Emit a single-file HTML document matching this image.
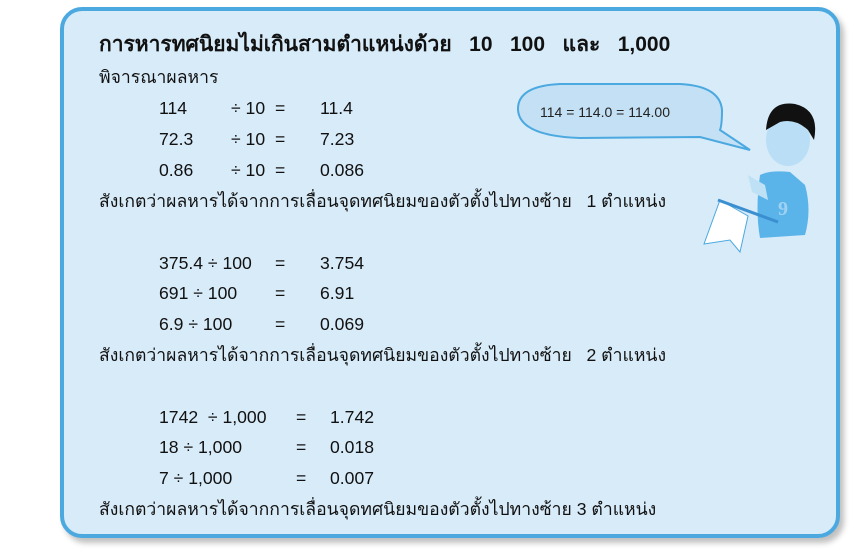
<!DOCTYPE html><html><head><meta charset="utf-8"><style>
body{margin:0;width:864px;height:557px;background:#fff;position:relative;font-family:"Liberation Sans","Noto Sans CJK SC",sans-serif;color:#111;overflow:hidden}
.box{position:absolute;left:60px;top:7px;width:772px;height:523px;border:4px solid #4ba9e0;border-radius:22px;background:#d8ebf9;box-shadow:4px 5px 6px rgba(0,0,0,.25)}
.t{position:absolute;font-size:17.6px;white-space:nowrap;line-height:20px}
.h{font-weight:bold;font-size:21px}
</style></head><body>
<div class="box"></div>
<div class="t h" style="left:99px;top:35px">การหารทศนิยมไม่เกินสามตำแหน่งด้วย&nbsp;&nbsp; 10&nbsp;&nbsp; 100&nbsp;&nbsp; และ&nbsp;&nbsp; 1,000</div>
<div class="t" style="left:99px;top:67px">พิจารณาผลหาร</div>
<div class="t" style="left:159px;top:98px">114</div><div class="t" style="left:231px;top:98px">÷ 10</div><div class="t" style="left:275px;top:98px">=</div><div class="t" style="left:320px;top:98px">11.4</div>
<div class="t" style="left:159px;top:129px">72.3</div><div class="t" style="left:231px;top:129px">÷ 10</div><div class="t" style="left:275px;top:129px">=</div><div class="t" style="left:320px;top:129px">7.23</div>
<div class="t" style="left:159px;top:160px">0.86</div><div class="t" style="left:231px;top:160px">÷ 10</div><div class="t" style="left:275px;top:160px">=</div><div class="t" style="left:320px;top:160px">0.086</div>
<div class="t" style="left:99px;top:191px">สังเกตว่าผลหารได้จากการเลื่อนจุดทศนิยมของตัวตั้งไปทางซ้าย&nbsp;&nbsp; 1 ตำแหน่ง</div>
<div class="t" style="left:159px;top:253px">375.4 ÷ 100</div><div class="t" style="left:275px;top:253px">=</div><div class="t" style="left:320px;top:253px">3.754</div>
<div class="t" style="left:159px;top:283px">691 ÷ 100</div><div class="t" style="left:275px;top:283px">=</div><div class="t" style="left:320px;top:283px">6.91</div>
<div class="t" style="left:159px;top:314px">6.9 ÷ 100</div><div class="t" style="left:275px;top:314px">=</div><div class="t" style="left:320px;top:314px">0.069</div>
<div class="t" style="left:99px;top:345px">สังเกตว่าผลหารได้จากการเลื่อนจุดทศนิยมของตัวตั้งไปทางซ้าย&nbsp;&nbsp; 2 ตำแหน่ง</div>
<div class="t" style="left:159px;top:407px">1742&nbsp; ÷ 1,000</div><div class="t" style="left:296px;top:407px">=</div><div class="t" style="left:330px;top:407px">1.742</div>
<div class="t" style="left:159px;top:437px">18 ÷ 1,000</div><div class="t" style="left:296px;top:437px">=</div><div class="t" style="left:330px;top:437px">0.018</div>
<div class="t" style="left:159px;top:468px">7 ÷ 1,000</div><div class="t" style="left:296px;top:468px">=</div><div class="t" style="left:330px;top:468px">0.007</div>
<div class="t" style="left:99px;top:499px">สังเกตว่าผลหารได้จากการเลื่อนจุดทศนิยมของตัวตั้งไปทางซ้าย 3 ตำแหน่ง</div>
<svg style="position:absolute;left:0;top:0" width="864" height="557">
<path d="M560 84 Q517 86 518 110 Q520 136 580 138 L700 137 L750 150 L720 130 Q722 125 722 110 Q720 86 680 84 Z" fill="#c3e0f5" stroke="#4ba9e0" stroke-width="2"/>
<text x="540" y="117" font-family="Liberation Sans" font-size="14" fill="#222">114 = 114.0 = 114.00</text>
<path d="M760 175 Q770 170 790 172 L805 185 Q812 210 805 235 L760 238 Q755 210 760 175 Z" fill="#5ab4ea"/>
<path d="M748 175 L765 185 L768 200 L752 192 Z" fill="#bfe1f6"/>
<path d="M720 200 L748 216 L740 252 L730 240 L704 244 Z" fill="#fff" stroke="#4ba9e0"/>
<line x1="718" y1="200" x2="778" y2="222" stroke="#3b8fd0" stroke-width="3"/>
<ellipse cx="788" cy="140" rx="22" ry="26" fill="#b9def6"/>
<path d="M766 130 Q768 100 795 104 Q820 110 814 140 L808 130 Q795 118 780 122 Z" fill="#111"/>
<text x="778" y="215" font-family="Liberation Serif" font-size="20" font-weight="bold" fill="#9fd2f2">9</text>
</svg>
</body></html>
